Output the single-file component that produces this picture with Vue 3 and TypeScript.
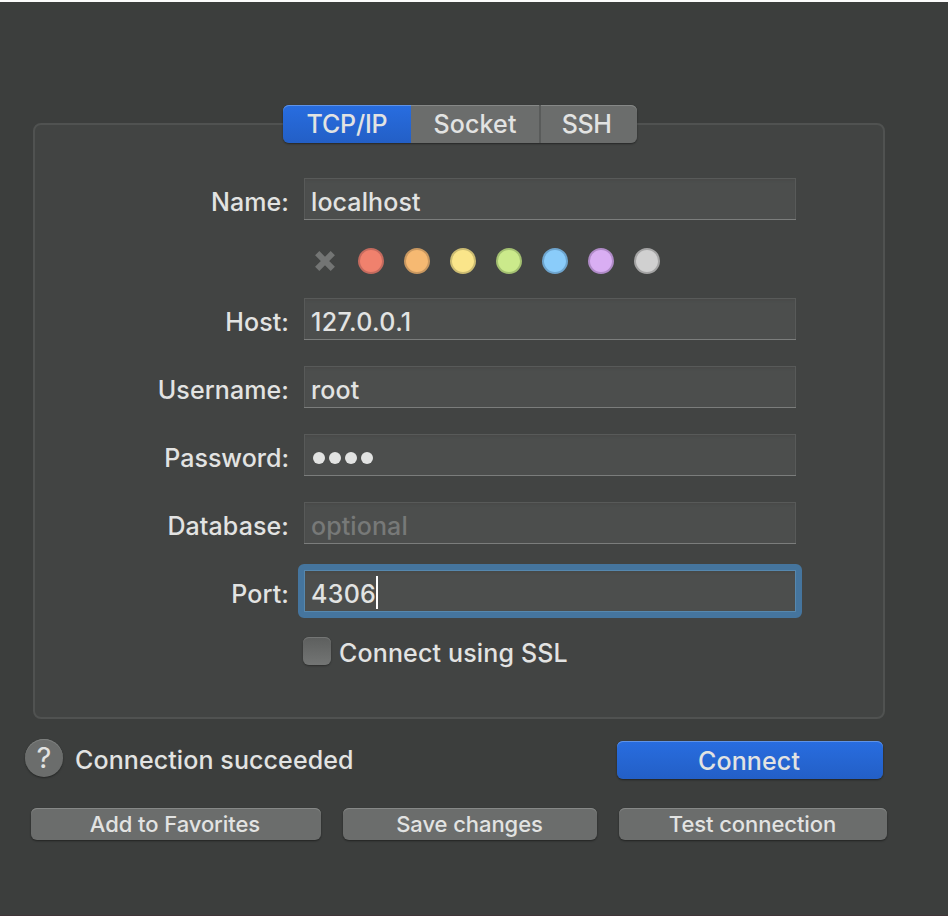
<script setup lang="ts">
import { ref } from 'vue'

interface Field {
  id: string
  label: string
  value: string
  placeholder?: string
  secret?: boolean
  focused?: boolean
}

const tabs = [
  { id: 'tcp', label: 'TCP/IP' },
  { id: 'socket', label: 'Socket' },
  { id: 'ssh', label: 'SSH' },
]
const activeTab = ref('tcp')

const colors = ['red', 'orange', 'yellow', 'green', 'blue', 'purple', 'gray']

const fields: Field[] = [
  { id: 'host', label: 'Host:', value: '127.0.0.1' },
  { id: 'username', label: 'Username:', value: 'root' },
  { id: 'password', label: 'Password:', value: 'root', secret: true },
  { id: 'database', label: 'Database:', value: '', placeholder: 'optional' },
  { id: 'port', label: 'Port:', value: '4306', focused: true },
]
</script>

<template>
  <main class="window">
    <section class="panel">
      <nav class="tabs">
        <button
          v-for="tab in tabs"
          :key="tab.id"
          class="tab"
          :class="[tab.id, { active: tab.id === activeTab }]"
          @click="activeTab = tab.id"
        >
          <span class="txt">{{ tab.label }}</span>
        </button>
      </nav>

      <div class="form">
        <div class="row">
          <span class="label"><span class="txt l-name">Name:</span></span>
          <div class="field"><span class="txt v-name">localhost</span></div>
        </div>

        <div class="swatches">
          <svg class="clear" viewBox="0 0 20 20" width="20" height="20">
            <path d="M2.2 2.2 17.8 17.8M17.8 2.2 2.2 17.8" />
          </svg>
          <span v-for="color in colors" :key="color" class="dot" :class="color"></span>
        </div>

        <div v-for="field in fields" :key="field.id" class="row">
          <span class="label"><span class="txt" :class="'l-' + field.id">{{ field.label }}</span></span>
          <div class="field" :class="{ focused: field.focused }">
            <span v-if="field.secret" class="bullets"><i v-for="n in field.value.length" :key="n"></i></span>
            <span v-else-if="field.value" class="txt" :class="'v-' + field.id">{{ field.value }}</span>
            <span v-else class="txt placeholder">{{ field.placeholder }}</span>
            <span v-if="field.focused" class="caret"></span>
          </div>
        </div>

        <label class="ssl">
          <span class="checkbox"></span>
          <span class="txt">Connect using SSL</span>
        </label>
      </div>
    </section>

    <footer class="status">
      <button class="help"><span class="txt">?</span></button>
      <span class="txt message">Connection succeeded</span>
      <button class="connect"><span class="txt">Connect</span></button>
    </footer>

    <div class="actions">
      <button class="action add"><span class="txt">Add to Favorites</span></button>
      <button class="action save"><span class="txt">Save changes</span></button>
      <button class="action test"><span class="txt">Test connection</span></button>
    </div>
  </main>
</template>

<style>
body {
  margin: 0;
  background: #3c3e3d;
}
</style>

<style scoped>
.window {
  box-sizing: border-box;
  height: 916px;
  padding: 121px 0 0;
  border-top: 2px solid #fcfcfc;
  background: #3c3e3d;
  box-shadow: inset 0 -1px #403538;
  color: #e2e3e2;
  font: 450 25px/30px Inter, 'Liberation Sans', sans-serif;
  letter-spacing: 0.1px;
}
button {
  margin: 0;
  padding: 0;
  border: 0;
  color: inherit;
  font: inherit;
  letter-spacing: inherit;
}
.txt {
  display: inline-block;
  white-space: nowrap;
}
.panel {
  box-sizing: border-box;
  width: 852px;
  height: 596px;
  margin-left: 33px;
  border: 2px solid #505251;
  border-radius: 8px;
  background: #424443;
}
.tabs {
  display: flex;
  width: 354px;
  height: 38px;
  margin: -20px 0 0 248px;
  border-radius: 6px;
  box-shadow: 0 1px 2px rgba(0, 0, 0, 0.45);
}
.tab {
  display: flex;
  align-items: center;
  justify-content: center;
  background: #6b6d6c;
  box-shadow: inset 0 1px #868887;
}
.tab.tcp {
  width: 128px;
  border-radius: 6px 0 0 6px;
  letter-spacing: -0.2px;
}
.tab.socket {
  box-sizing: border-box;
  width: 130px;
  border-right: 2px solid #595b5a;
  letter-spacing: 0.15px;
}
.tab.ssh {
  box-sizing: border-box;
  width: 96px;
  padding-right: 5px;
  border-radius: 0 6px 6px 0;
  letter-spacing: -0.4px;
}
.tab.active {
  background: linear-gradient(#286de0, #235fc6);
  box-shadow: inset 0 1px #5f93e8;
}
.form {
  padding-top: 35px;
}
.row {
  display: flex;
  height: 42px;
  margin-bottom: 26px;
}
.label {
  display: flex;
  align-items: center;
  justify-content: flex-end;
  width: 254px;
  padding-top: 6px;
  margin-right: 15px;
}
.l-password {
  letter-spacing: 0;
}
.field {
  position: relative;
  display: flex;
  align-items: center;
  box-sizing: border-box;
  width: 492px;
  padding: 6px 0 0 7px;
  background: #4c4e4d;
  box-shadow:
    inset 0 -1px #7b7d7c,
    inset 0 0 0 1px #585a59,
    inset 0 3px 3px -1px #474948;
}
.field.focused {
  box-shadow:
    inset 0 0 0 1px #5688ae,
    inset 0 3px 3px -1px #454746;
}
.field.focused::before {
  position: absolute;
  inset: -6px;
  border: 6px solid #45759e;
  border-radius: 6px;
  content: '';
}
.v-host {
  letter-spacing: 0.35px;
}
.v-port {
  letter-spacing: 0.3px;
}
.placeholder {
  color: #777978;
}
.bullets {
  display: flex;
  gap: 4px;
  padding: 0 0 1px 2px;
}
.bullets i {
  width: 12px;
  height: 12px;
  border-radius: 50%;
  background: #e2e3e2;
}
.caret {
  width: 2px;
  height: 33px;
  margin-bottom: 3px;
  background: #fff;
}
.swatches {
  display: flex;
  align-items: center;
  height: 26px;
  margin: 28px 0 24px 280px;
}
.clear {
  margin-right: 23px;
  fill: none;
  stroke: #737574;
  stroke-width: 6;
}
.dot {
  box-sizing: border-box;
  width: 26px;
  height: 26px;
  margin-right: 20px;
  border: 2px solid;
  border-radius: 50%;
}
.red { background: #f0816d; border-color: #c56b5e; }
.orange { background: #f6b972; border-color: #c99860; }
.yellow { background: #fae58a; border-color: #ccbc72; }
.green { background: #cbea8b; border-color: #a4c171; }
.blue { background: #8accfa; border-color: #6ea5ce; }
.purple { background: #d9aef3; border-color: #b08bc8; }
.gray { background: #d0d0d0; border-color: #a4a4a4; }
.ssl {
  display: flex;
  align-items: flex-start;
  height: 30px;
  margin: -1px 0 0 268px;
}
.ssl .txt {
  margin-top: 1px;
  letter-spacing: 0.15px;
}
.checkbox {
  width: 28px;
  height: 28px;
  margin-right: 8px;
  border-radius: 6px;
  background: linear-gradient(#5d5f5e, #737574);
  box-shadow: inset 0 1px #747675, 0 1px 2px rgba(0, 0, 0, 0.35);
}
.status {
  display: flex;
  align-items: flex-start;
  height: 40px;
  margin: 20px 0 0 25px;
}
.help {
  width: 38px;
  height: 38px;
  border-radius: 50%;
  background: #6b6d6c;
  box-shadow: inset 0 1px #7e807f, 0 1px 2px rgba(0, 0, 0, 0.4);
  font-size: 29px;
  font-weight: 400;
  line-height: 38px;
}
.message {
  width: 542px;
  margin: 6px 0 0 12px;
  letter-spacing: 0.1px;
}
.connect {
  width: 266px;
  height: 38px;
  margin-top: 2px;
  border-radius: 6px;
  background: linear-gradient(#286de0, #235fc6);
  box-shadow: inset 0 1px #5f93e8, 0 1px 2px rgba(0, 0, 0, 0.45);
  letter-spacing: 0.15px;
}
.connect .txt {
  padding: 1px 2px 0 0;
}
.actions {
  display: flex;
  gap: 22px;
  margin: 29px 0 0 31px;
}
.action {
  height: 32px;
  border-radius: 6px;
  background: #6b6d6c;
  box-shadow: inset 0 1px #868887, 0 1px 2px rgba(0, 0, 0, 0.45);
  font-size: 22px;
  letter-spacing: -0.07px;
}
.action .txt {
  padding-right: 1px;
}
.add { width: 290px; }
.add .txt { padding-right: 2px; }
.save { width: 254px; }
.test { width: 268px; }
</style>
